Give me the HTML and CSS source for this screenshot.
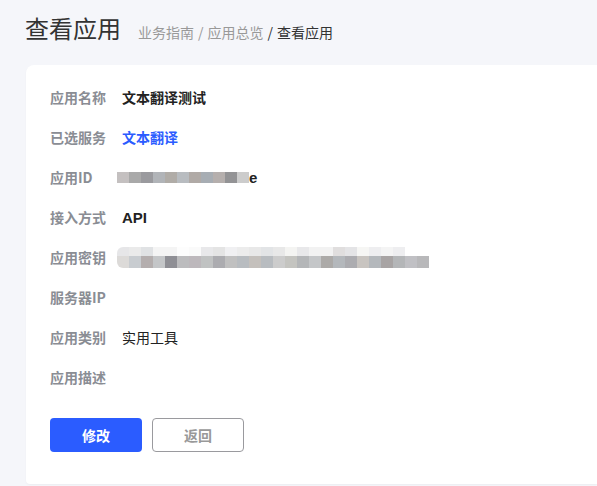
FILE: index.html
```html
<!DOCTYPE html>
<html lang="zh-CN">
<head>
<meta charset="utf-8">
<title>查看应用</title>
<link rel="stylesheet" href="styles.css">
</head>
<body>
<div class="page">
  <header class="header">
    <h1 class="title">查看应用</h1>
    <nav class="crumbs"><span class="crumb">业务指南</span><span class="sep">/</span><span class="crumb">应用总览</span><span class="sep dark">/</span><span class="crumb current">查看应用</span></nav>
  </header>
  <main class="card">
    <div class="row"><span class="label">应用名称</span><span class="value strong">文本翻译测试</span></div>
    <div class="row"><span class="label">已选服务</span><span class="value link">文本翻译</span></div>
    <div class="row"><span class="label">应用ID</span><span class="value id"><span class="blur-id"></span><span class="strong">e</span></span></div>
    <div class="row"><span class="label">接入方式</span><span class="value strong api">API</span></div>
    <div class="row"><span class="label">应用密钥</span><span class="value"><span class="blur-key"><span class="blur-key-top"></span><span class="blur-key-bottom"></span></span></span></div>
    <div class="row"><span class="label">服务器IP</span><span class="value"></span></div>
    <div class="row"><span class="label">应用类别</span><span class="value">实用工具</span></div>
    <div class="row"><span class="label">应用描述</span><span class="value"></span></div>
    <div class="actions">
      <button class="btn primary">修改</button>
      <button class="btn ghost">返回</button>
    </div>
  </main>
</div>
</body>
</html>
```
FILE: styles.css
```css
* { box-sizing: border-box; }
html, body { margin: 0; padding: 0; }
body {
  background: #f5f6fa;
  font-family: "Noto Sans CJK SC", "Noto Sans", "Liberation Sans", sans-serif;
  color: #333;
  width: 597px;
  height: 486px;
  overflow: hidden;
}
.page { display: flex; flex-direction: column; height: 486px; }
.header {
  display: flex;
  align-items: baseline;
  gap: 17px;
  padding: 11px 0 0 25px;
  height: 65px;
}
.title {
  margin: 0;
  font-size: 24px;
  font-weight: 400;
  color: #333;
  line-height: 34px;
}
.crumbs { font-size: 14px; color: #999; line-height: 20px; display: flex; }
.sep { margin: 0 4px; }
.sep.dark { color: #333; }
.crumb.current { color: #333; }
.card {
  margin-left: 26px;
  height: 419px;
  background: #fff;
  border-top-left-radius: 8px;
  border-bottom-left-radius: 4px;
  box-shadow: 0 1px 2px rgba(0,0,0,0.04);
  padding: 12px 0 0 24px;
  display: flex;
  flex-direction: column;
}
.row {
  display: flex;
  align-items: center;
  height: 40px;
  font-size: 14px;
}
.label {
  width: 73px;
  flex: none;
  color: #8a8d94;
  font-weight: 700;
  font-size: 14px;
}
.value { color: #222; display: flex; align-items: center; margin-left: -1px; }
.strong { font-weight: 700; }
.api { font-family: "Liberation Sans", "Noto Sans CJK SC", sans-serif; font-size: 15px; }
.link { color: #2b5cff; font-weight: 700; }
.id { font-family: "Liberation Sans", sans-serif; font-size: 15px; }
.blur-id {
  display: inline-block;
  width: 132px;
  height: 11px;
  margin-left: -5px;
  background: linear-gradient(to right,
    #c4c0c0 0 12px, #a9a9a9 12px 24px, #9a9a9e 24px 36px, #b1b4b8 36px 48px,
    #b0aca7 48px 60px, #b8bcc0 60px 72px, #b0aaa6 72px 84px, #a7adb3 84px 96px,
    #b5afad 96px 108px, #939395 108px 120px, #cccccc 120px 132px);
}
.blur-key {
  display: flex;
  flex-direction: column;
  margin-left: -5px;
  border-top-left-radius: 6px;
  border-bottom-left-radius: 6px;
  overflow: hidden;
  width: 312px;
}
.blur-key-top {
  height: 9px;
  width: 288px;
  background: linear-gradient(to right,
    #e6e6e8 0 12px, #eaeaea 12px 24px, #e0e2e4 24px 36px, #f4f4f4 36px 48px,
    #f4f4f4 48px 60px, #fdfdfd 60px 72px, #fafafa 72px 84px, #e8e8ea 84px 96px,
    #e4e4e4 96px 108px, #f0f0f2 108px 120px, #ececec 120px 132px, #e8e8e8 132px 144px,
    #e2e4e6 144px 156px, #e8e8e8 156px 168px, #f4f4f2 168px 180px, #e8e8ea 180px 192px,
    #f2f2f2 192px 204px, #f2f2f2 204px 216px, #e0dede 216px 228px, #e4e4e6 228px 240px,
    #f6f6f4 240px 252px, #eeeef0 252px 264px, #f4f4f4 264px 276px, #eeeef0 276px 288px);
}
.blur-key-bottom {
  height: 12px;
  width: 312px;
  background: linear-gradient(to right,
    #dcdad8 0 12px, #c8ccd0 12px 24px, #b4aeae 24px 36px, #c4c6c8 36px 48px,
    #8f8f95 48px 60px, #bcbcbe 60px 72px, #bdb8bc 72px 84px, #c0c2c2 84px 96px,
    #acacb0 96px 108px, #c0c0c0 108px 120px, #b8bcc0 120px 132px, #c4c0bc 132px 144px,
    #b8bcc0 144px 156px, #cccccc 156px 168px, #c4c4c0 168px 180px, #b4b6b8 180px 192px,
    #c4c6c8 192px 204px, #acaaa8 204px 216px, #b4b8bc 216px 228px, #acacb0 228px 240px,
    #c8c4c0 240px 252px, #b4b8bc 252px 264px, #a8a4a4 264px 276px, #b4b6b8 276px 288px,
    #c0c0c4 288px 300px, #b8b8ba 300px 312px);
}
.actions {
  display: flex;
  gap: 10px;
  margin-top: 21px;
}
.btn {
  width: 92px;
  height: 34px;
  border-radius: 4px;
  font-family: "Noto Sans CJK SC", sans-serif;
  font-size: 14px;
  font-weight: 700;
  cursor: pointer;
}
.primary { background: #2b5cff; color: #fff; border: none; }
.ghost { background: #fff; color: #999; border: 1px solid #9a9a9e; }
```
